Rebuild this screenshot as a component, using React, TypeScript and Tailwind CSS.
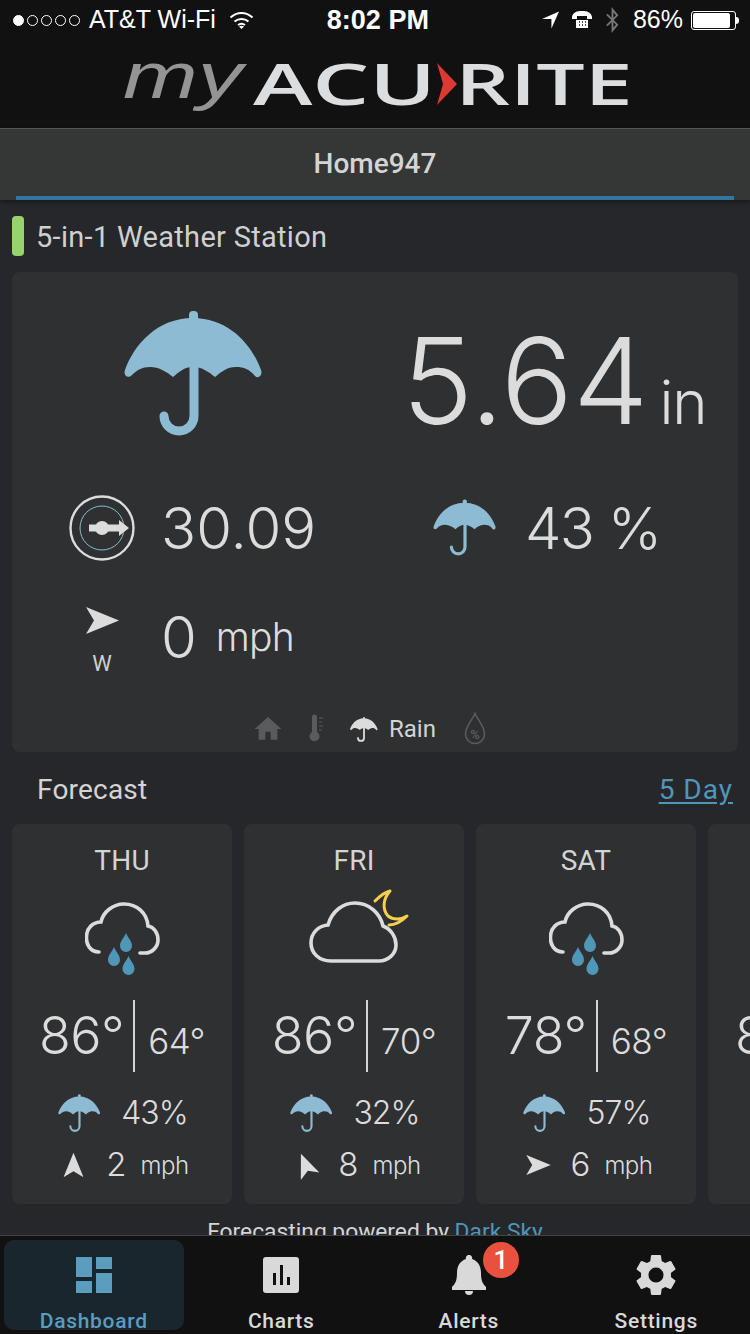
import React from 'react';
import { MdHome, MdSettings } from 'react-icons/md';

const CANOPY = 'M69 8C105 8 128 35 137 60C139 66 134 69 131 66C125 59 120 57 112 57C103 57 97 62 91 67C85 62 78 57 69 57C60 57 55 62 49 67C43 62 35 57 26 57C18 57 13 60 8 65C4 69 -1 66 1 60C10 35 33 8 69 8Z';

const Umbrella: React.FC<{ className: string; color?: string; handle?: number }> = ({ className, color = '#8dbbd3', handle = 9 }) => (
  <svg viewBox="0 0 140 128" className={className}>
    <path d={CANOPY} fill={color} />
    <rect x="65" y="1" width="9" height="12" rx="4" fill={color} />
    <path d="M70 55V106A15 15 0 0 1 40 106" fill="none" stroke={color} strokeWidth={handle} strokeLinecap="round" />
  </svg>
);

const WindArrow: React.FC<{ className: string }> = ({ className }) => (
  <svg viewBox="0 0 33 27" className={className}>
    <path d="M0 0L33 13.5L0 27L8 13.5Z" fill="#dcdcdc" />
  </svg>
);

const Drop: React.FC<{ x: number; y: number }> = ({ x, y }) => (
  <path d={`M${x} ${y}C${x + 2} ${y + 5} ${x + 6} ${y + 8} ${x + 6} ${y + 13}A6 6 0 0 1 ${x - 6} ${y + 13}C${x - 6} ${y + 8} ${x - 2} ${y + 5} ${x} ${y}Z`} fill="#4f96b8" />
);

const RainCloud = () => (
  <svg viewBox="0 0 75 76" className="w-[75px] h-[76px]">
    <path d="M14 50C5 50 1 42 1.5 35C1.5 26 8 20 16 20C18 10 28 2 39 2C52 2 62 11 63 24C69 25 73 31 73 38C73 45 67 51 60 51H55" fill="none" stroke="#dcdcdc" strokeWidth="3.6" strokeLinecap="round" />
    <Drop x={41} y={31} />
    <Drop x={29} y={45} />
    <Drop x={43.5} y={54} />
  </svg>
);

const MoonCloud = () => (
  <svg viewBox="0 0 100 76" className="w-[100px] h-[76px] mb-[13px] ml-[10px]">
    <path d="M22 72C10 72 2 64 2 54C2 44 9 37 19 36C23 22 34 14 46 14C60 14 71 24 74 37C82 40 87 48 87 56C87 65 79 72 70 72Z" fill="none" stroke="#dcdcdc" strokeWidth="3.6" />
    <path d="M66 12C71 7 76 3 81 2C74 10 73 20 79 27C84 31 92 31 98 27C93 32 86 36 80 36" fill="none" stroke="#f5cf4f" strokeWidth="3" strokeLinejoin="round" strokeLinecap="round" />
  </svg>
);

type Day = { name: string; icon: React.ReactNode; high: number; low: number; rain: number; wind: number; arrow: string };

const days: Day[] = [
  { name: 'THU', icon: <RainCloud />, high: 86, low: 64, rain: 43, wind: 2, arrow: '-rotate-90' },
  { name: 'FRI', icon: <MoonCloud />, high: 86, low: 70, rain: 32, wind: 8, arrow: '-rotate-[112deg]' },
  { name: 'SAT', icon: <RainCloud />, high: 78, low: 68, rain: 57, wind: 6, arrow: 'rotate-0' },
  { name: 'SUN', icon: <RainCloud />, high: 84, low: 66, rain: 40, wind: 5, arrow: 'rotate-0' },
];

const DayCard: React.FC<{ day: Day }> = ({ day }) => (
  <div className="w-[220px] h-[380px] shrink-0 bg-[#2f3032] rounded-lg flex flex-col items-center">
    <div className="h-[62px] pt-[12px] text-[28px] leading-[50px] text-[#d4d4d4] tracking-[0.3px]">{day.name}</div>
    <div className="h-[92px] flex items-end">{day.icon}</div>
    <div className="mt-[22px] h-[72px] flex items-baseline font-['Inter',sans-serif] font-light tracking-[-0.03em]">
      <span className="text-[52px] leading-[72px]">{day.high}°</span>
      <span className="self-stretch w-[2px] bg-[#d4d4d4] ml-[9px] mr-[13px]" />
      <span className="text-[35px] leading-[72px]">{day.low}°</span>
    </div>
    <div className="mt-[21px] h-[40px] flex items-center gap-[20px] pl-[2px]">
      <Umbrella className="w-[43px] h-[39px]" handle={7} />
      <span className="text-[32px] font-['Inter',sans-serif] font-light tracking-[-0.03em]">{day.rain}%</span>
    </div>
    <div className="mt-[12px] h-[40px] flex items-center pl-[6px] font-['Inter',sans-serif] font-light">
      <WindArrow className={`w-[25px] h-[20px] ${day.arrow}`} />
      <span className="ml-[20px] text-[33px]">{day.wind}</span>
      <span className="ml-[14px] mt-[2px] text-[24px] tracking-[-0.02em]">mph</span>
    </div>
  </div>
);

const StatusBar = () => (
  <div className="h-10 flex items-center pl-[13px] pr-[11px] text-white font-['Liberation_Sans',sans-serif] text-[25px] whitespace-nowrap">
    <div className="flex gap-[3px] w-[76px] shrink-0">
      <span className="w-[11px] h-[11px] rounded-full bg-white border border-white" />
      {[0, 1, 2, 3].map(i => <span key={i} className="w-[11px] h-[11px] rounded-full border border-white" />)}
    </div>
    <span>AT&amp;T Wi-Fi</span>
    <svg viewBox="0 0 24 18" className="w-[25px] h-[18px] ml-[13px] shrink-0">
      <path d="M1 6.5C7.5 0.5 16.5 0.5 23 6.5M5 10.5C9 7 15 7 19 10.5M8.5 14C10.5 12.5 13.5 12.5 15.5 14" fill="none" stroke="#fff" strokeWidth="2" />
      <path d="M12 18L9.5 15.5C11 14.5 13 14.5 14.5 15.5Z" fill="#fff" />
    </svg>
    <span className="ml-[73px] text-[27px] font-bold">8:02 PM</span>
    <svg viewBox="0 0 18 18" className="w-[17px] h-[18px] ml-[113px] shrink-0">
      <path d="M18 0L10 18V8H0Z" fill="#fff" />
    </svg>
    <svg viewBox="0 0 20 18" className="w-[20px] h-[18px] ml-[13px] shrink-0">
      <path d="M0 6C1 1 5 0 10 0C15 0 19 1 20 6V8H15V5H5V8H0Z" fill="#fff" />
      <path d="M4 9H16V17H4Z" fill="#fff" />
      <path d="M7 11H8M10 11H11M13 11H14M7 14H8M10 14H11M13 14H14" stroke="#111" strokeWidth="1.4" />
    </svg>
    <svg viewBox="0 0 16 26" className="w-[15px] h-[26px] ml-[13px] shrink-0">
      <path d="M2 7L13 18L8 24V2L13 8L2 19" fill="none" stroke="#777" strokeWidth="2" />
    </svg>
    <span className="ml-[13px]">86%</span>
    <div className="ml-[8px] w-[45px] h-[19px] shrink-0 border border-white rounded-[3px] p-[1px]">
      <div className="w-[37px] h-full bg-white rounded-[2px]" />
    </div>
    <div className="w-[3px] h-[7px] shrink-0 bg-white rounded-r-sm" />
  </div>
);

const Logo = () => (
  <div className="h-[88px] flex items-center justify-center font-['Open_Sans',sans-serif] select-none">
    <span className="w-[132px] text-[64px] leading-none italic font-light text-[#949494] -mt-[16px] origin-left scale-x-[1.4] font-['Liberation_Sans',sans-serif]">my</span>
    <span className="w-[179px] -mt-[2px] text-center text-[58px] leading-none font-semibold text-[#dcddde] inline-block scale-x-[1.55] whitespace-nowrap">ACU</span>
    <svg viewBox="0 0 20 42" className="w-[20px] h-[42px] mx-[3px]">
      <path d="M0 0L20 21L0 42L6 21Z" fill="#db3a33" />
    </svg>
    <span className="w-[168px] -mt-[2px] text-center text-[58px] leading-none font-semibold text-[#dcddde] inline-block scale-x-[1.48] whitespace-nowrap">RITE</span>
  </div>
);

const Barometer = () => (
  <svg viewBox="0 0 66 66" className="w-[66px] h-[66px]">
    <circle cx="33" cy="33" r="31.5" fill="none" stroke="#dcdcdc" strokeWidth="2.4" />
    <circle cx="33" cy="33" r="22" fill="none" stroke="#8dbbd3" strokeWidth="1" />
    <circle cx="33" cy="33" r="7" fill="#dcdcdc" />
    <path d="M20 29.5H50V25L60 33L50 41V36.5H20Z" fill="#dcdcdc" />
  </svg>
);

const NavItem: React.FC<{ label: string; active?: boolean; children: React.ReactNode }> = ({ label, active, children }) => (
  <div className={`relative h-[90px] mx-[4px] rounded-[10px] flex flex-col items-center ${active ? 'bg-[#1a262d] text-[#5a9dbf]' : 'text-[#d9d9d9]'}`}>
    <div className="h-[69px] shrink-0 flex items-center justify-center">{children}</div>
    <span className="text-[21px] leading-[24px] shrink-0 font-medium tracking-[0.7px]">{label}</span>
  </div>
);

export default function App() {
  return (
    <div className="w-[750px] h-[1334px] overflow-hidden flex flex-col bg-[#26272a] text-[#dcdcdc] font-['Roboto',sans-serif]">
      <div className="bg-[#111111] shrink-0">
        <StatusBar />
        <Logo />
      </div>
      <div className="h-[72px] shrink-0 bg-[#353737] border-t border-[#555] px-4 shadow-[0_2px_4px_rgba(0,0,0,0.4)]">
        <div className="h-full border-b-4 border-[#33759f] flex items-center justify-center pt-[3px] text-[28px] font-medium text-[#d4d4d4]">Home947</div>
      </div>

      <div className="flex-1 min-h-0 overflow-hidden">
        <div className="h-[72px] px-3 pt-[3px] flex items-center gap-[12px]">
          <span className="w-3 h-10 -mt-[3px] rounded bg-[#97d36c]" />
          <span className="text-[29px] text-[#d0d0d0] tracking-[0.3px]">5-in-1 Weather Station</span>
        </div>

        <div className="mx-3 h-[480px] bg-[#2f3032] rounded-lg flex flex-col font-['Inter',sans-serif] font-light">
          <div className="h-[204px] flex items-center pl-[112px]">
            <Umbrella className="w-[140px] h-[128px]" handle={9} />
            <span className="ml-[138px] mt-[14px] text-[120px] leading-none">5.64</span>
            <span className="ml-[11px] mt-[56px] text-[60px] leading-none tracking-[-0.02em]">in</span>
          </div>
          <div className="h-[104px] flex items-center pl-[57px]">
            <Barometer />
            <span className="ml-[26px] w-[272px] text-[58px]">30.09</span>
            <Umbrella className="w-[64px] h-[58px]" handle={7} />
            <span className="ml-[28px] text-[58px] tracking-[-0.03em]">43 %</span>
          </div>
          <div className="h-[110px] flex items-center pl-[57px]">
            <div className="w-[66px] mt-[14px] flex flex-col items-center">
              <WindArrow className="w-[33px] h-[27px]" />
              <span className="mt-[17px] text-[22px] leading-[26px] text-[#d0d0d0] font-['Roboto',sans-serif] font-normal">W</span>
            </div>
            <span className="ml-[26px] mt-[4px] text-[58px]">0</span>
            <span className="ml-[19px] mt-[4px] text-[39px] tracking-[-0.02em]">mph</span>
          </div>
          <div className="flex-1 flex items-center pl-[240px] pt-[16px] font-['Roboto',sans-serif] font-normal">
            <MdHome size={32} className="text-[#5a5b5d]" />
            <svg viewBox="0 0 14 30" className="w-[14px] h-[30px] ml-[25px]">
              <path d="M3 3A2.5 2.5 0 0 1 8 3V18A5 5 0 1 1 3 18Z" fill="#5a5b5d" />
              <path d="M10 4H14M10 8H13M10 12H14M10 16H13" stroke="#5a5b5d" strokeWidth="1.2" />
            </svg>
            <Umbrella className="w-[28px] h-[27px] ml-[27px]" color="#dcdcdc" handle={9} />
            <span className="ml-[11px] text-[24px] text-[#d4d4d4]">Rain</span>
            <svg viewBox="0 0 22 34" className="w-[22px] h-[34px] ml-[28px]">
              <path d="M11 1.5C13 7 20.5 14 20.5 22A9.5 9.5 0 0 1 1.5 22C1.5 14 9 7 11 1.5Z" fill="none" stroke="#5a5b5d" strokeWidth="1.6" />
              <text x="11" y="27" textAnchor="middle" fontSize="13" fontWeight="700" fill="#5a5b5d">%</text>
            </svg>
          </div>
        </div>

        <div className="h-[72px] pl-[37px] pr-[17px] pt-[3px] flex items-center justify-between text-[28px]">
          <span className="text-[#d4d4d4] tracking-[0.2px]">Forecast</span>
          <span className="text-[#4f96b8] underline underline-offset-[3px] tracking-[1px]">5 Day</span>
        </div>

        <div className="flex gap-3 px-3">
          {days.map(day => <DayCard key={day.name} day={day} />)}
        </div>

        <div className="mt-[14px] text-center text-[22.8px] leading-[28px] text-[#d4d4d4]">
          Forecasting powered by <span className="text-[#4f96b8]">Dark Sky</span>
        </div>
      </div>

      <div className="h-[99px] shrink-0 bg-[#111111] border-t border-[#444] grid grid-cols-4 pt-[4px]">
        <NavItem label="Dashboard" active>
          <div className="w-[36px] h-[36px] grid grid-cols-2 grid-rows-[20px_12px] gap-x-[4px] gap-y-[4px]">
            <div className="bg-[#5a9dbf]" />
            <div className="flex flex-col gap-[4px] row-span-2">
              <div className="h-[12px] bg-[#5a9dbf]" />
              <div className="flex-1 bg-[#5a9dbf]" />
            </div>
            <div className="bg-[#5a9dbf]" />
          </div>
        </NavItem>
        <NavItem label="Charts">
          <div className="w-[36px] h-[36px] rounded-[3px] bg-[#d9d9d9] flex items-end justify-center gap-[4px] pb-[8px]">
            <div className="w-[3px] h-[12px] bg-[#111111]" />
            <div className="w-[3px] h-[20px] bg-[#111111]" />
            <div className="w-[3px] h-[8px] bg-[#111111]" />
          </div>
        </NavItem>
        <NavItem label="Alerts">
          <svg viewBox="0 0 36 40" className="w-[36px] h-[40px]">
            <path d="M18 0A3 3 0 0 1 21 4C27 6 30 11 30 18C30 26 32 29 35 32V35H1V32C4 29 6 26 6 18C6 11 9 6 15 4A3 3 0 0 1 18 0Z" fill="#d9d9d9" />
            <path d="M14 36H22A4 4 0 0 1 14 36Z" fill="#d9d9d9" />
          </svg>
          <span className="absolute left-[104px] top-[2px] w-[36px] h-[36px] rounded-full bg-[#e9503e] text-white text-[26px] font-medium flex items-center justify-center">1</span>
        </NavItem>
        <NavItem label="Settings">
          <MdSettings size={50} />
        </NavItem>
      </div>
    </div>
  );
}
